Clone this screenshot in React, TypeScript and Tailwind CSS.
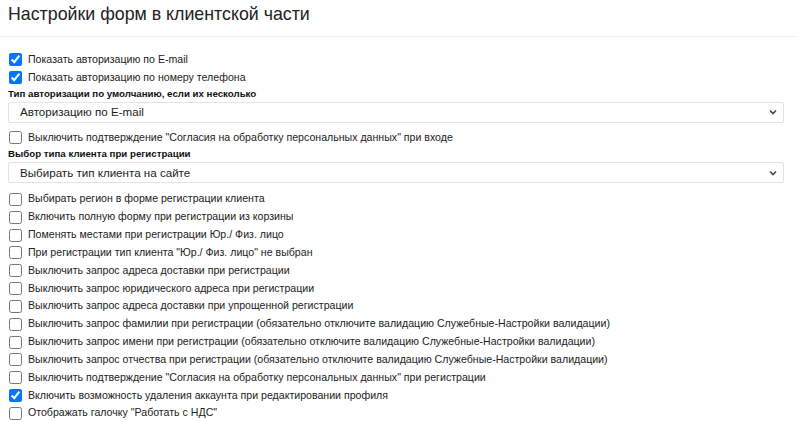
const topChecks = [
  { label: "Показать авторизацию по E-mail", checked: true },
  { label: "Показать авторизацию по номеру телефона", checked: true },
];

const bottomChecks = [
  { label: "Выбирать регион в форме регистрации клиента", checked: false },
  { label: "Включить полную форму при регистрации из корзины", checked: false },
  { label: "Поменять местами при регистрации Юр./ Физ. лицо", checked: false },
  { label: "При регистрации тип клиента \"Юр./ Физ. лицо\" не выбран", checked: false },
  { label: "Выключить запрос адреса доставки при регистрации", checked: false },
  { label: "Выключить запрос юридического адреса при регистрации", checked: false },
  { label: "Выключить запрос адреса доставки при упрощенной регистрации", checked: false },
  {
    label:
      "Выключить запрос фамилии при регистрации (обязательно отключите валидацию Служебные-Настройки валидации)",
    checked: false,
  },
  {
    label:
      "Выключить запрос имени при регистрации (обязательно отключите валидацию Служебные-Настройки валидации)",
    checked: false,
  },
  {
    label:
      "Выключить запрос отчества при регистрации (обязательно отключите валидацию Служебные-Настройки валидации)",
    checked: false,
  },
  {
    label: "Выключить подтверждение \"Согласия на обработку персональных данных\" при регистрации",
    checked: false,
  },
  { label: "Включить возможность удаления аккаунта при редактировании профиля", checked: true },
  { label: "Отображать галочку \"Работать с НДС\"", checked: false },
];

const Check = ({ label, checked }: { label: string; checked: boolean }) => (
  <label className="flex items-center h-[17.83px] gap-[6px] text-[10.6px] text-[#222]">
    <input
      type="checkbox"
      defaultChecked={checked}
      className="m-0 ml-px w-[13px] h-[13px] accent-[#0075ff]"
    />
    <span>{label}</span>
  </label>
);

const Select = ({ value }: { value: string }) => (
  <div className="flex items-center justify-between h-[21px] mr-[8px] border border-[#e3e3e3] rounded-[2px] pl-[11px] pr-[6px] text-[11.6px] text-[#222] bg-white">
    <span>{value}</span>
    <svg width="8" height="6" viewBox="0 0 8 6" className="text-[#444]">
      <polyline points="1,1.5 4,4.5 7,1.5" fill="none" stroke="currentColor" strokeWidth="1.6" />
    </svg>
  </div>
);

const Heading = ({ children }: { children: string }) => (
  <div className="text-[9.7px] font-bold text-[#111] leading-[14px]">{children}</div>
);

export default function App() {
  return (
    <div className="w-[800px] h-[422px] bg-white overflow-hidden font-['Liberation_Sans',Arial,sans-serif]">
      <div className="mr-[3px] border-b border-[#eeeeee] px-[8px] pt-[3px] pb-[10px]">
        <h1 className="text-[17.8px] leading-[23px] text-[#222]">Настройки форм в клиентской части</h1>
      </div>
      <div className="px-[8px] pt-[14px]">
        {topChecks.map((c) => (
          <Check key={c.label} {...c} />
        ))}
        <Heading>Тип авторизации по умолчанию, если их несколько</Heading>
        <div className="mt-[1px]">
          <Select value="Авторизацию по E-mail" />
        </div>
        <div className="mt-[6px]">
          <Check label={"Выключить подтверждение \"Согласия на обработку персональных данных\" при входе"} checked={false} />
        </div>
        <div className="mt-[1px]">
          <Heading>Выбор типа клиента при регистрации</Heading>
        </div>
        <div className="mt-[1px]">
          <Select value="Выбирать тип клиента на сайте" />
        </div>
        <div className="mt-[7px]">
          {bottomChecks.map((c) => (
            <Check key={c.label} {...c} />
          ))}
        </div>
      </div>
    </div>
  );
}
